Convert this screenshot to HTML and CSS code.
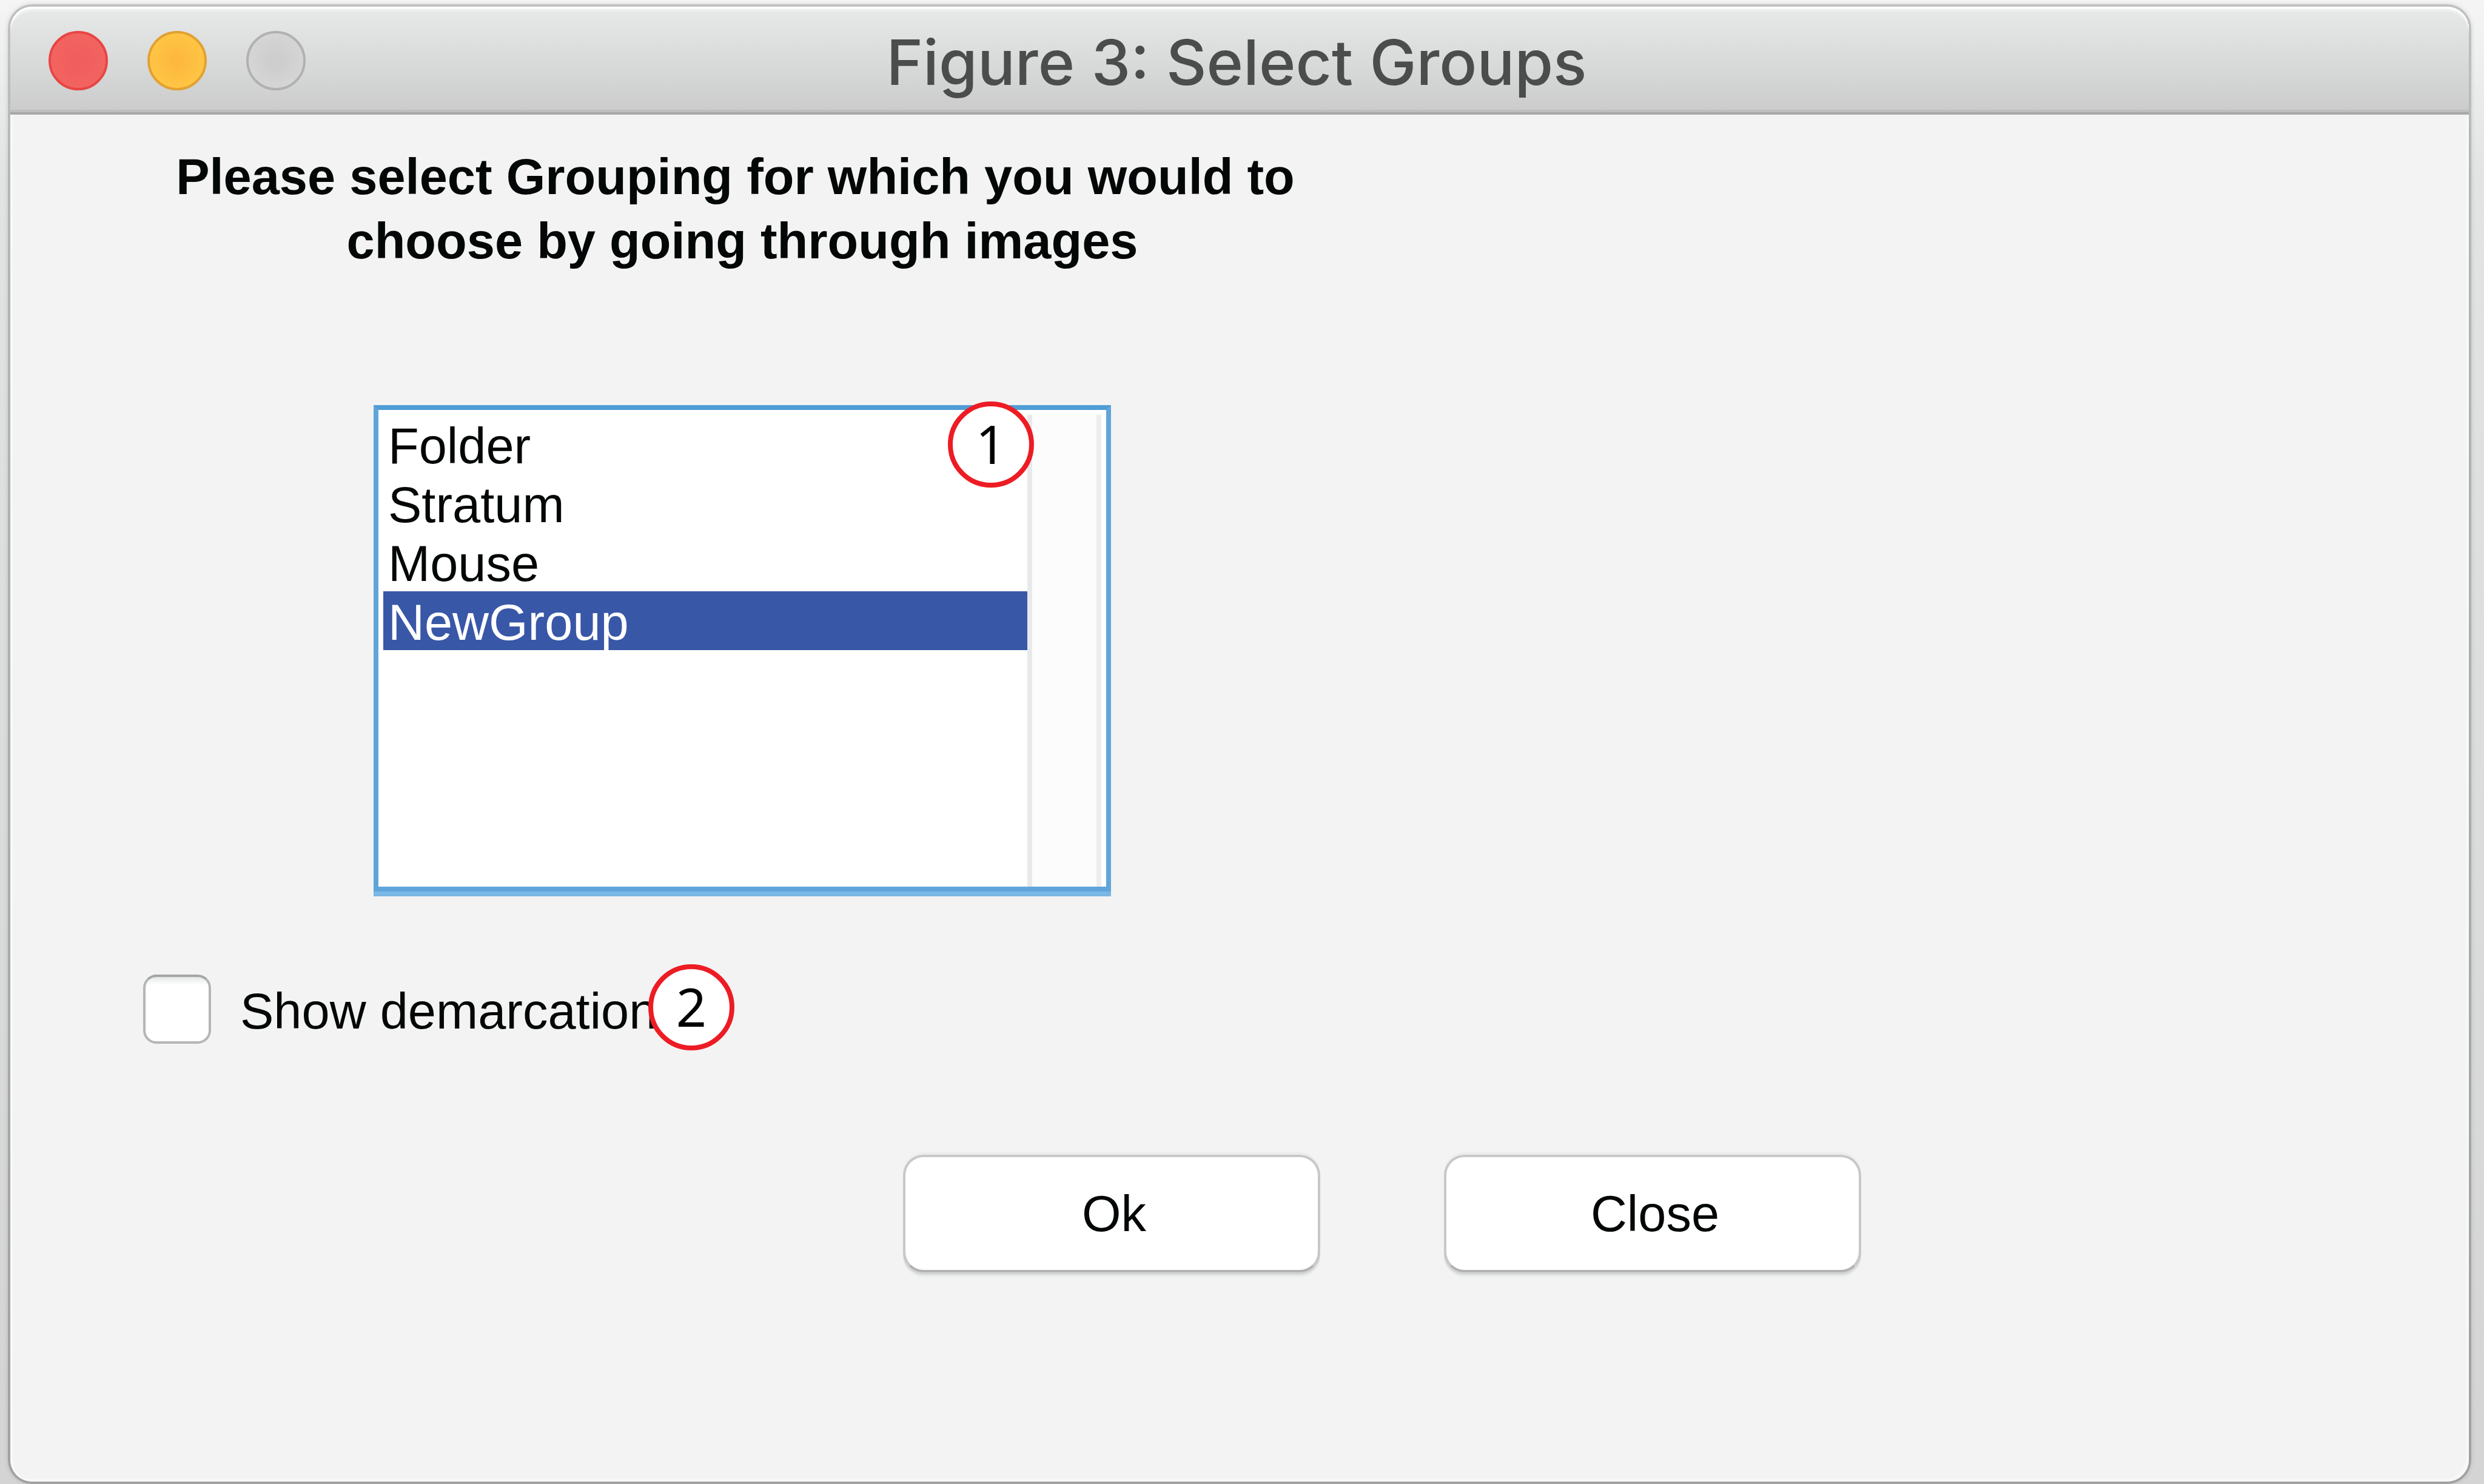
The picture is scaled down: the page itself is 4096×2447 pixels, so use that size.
FILE: index.html
```html
<!DOCTYPE html>
<html lang="en">
<head>
<meta charset="utf-8">
<title>Figure 3: Select Groups</title>
<link rel="stylesheet" href="styles.css">
</head>
<body>
<main class="window">
  <header class="titlebar">
    <div class="lights">
      <button class="light light-close" type="button" aria-label="Close window"></button>
      <button class="light light-minimize" type="button" aria-label="Minimize window"></button>
      <button class="light light-zoom" type="button" aria-label="Zoom window" disabled></button>
    </div>
    <h1 class="title">Figure 3: Select Groups</h1>
  </header>
  <form class="content">
    <div class="grouping">
      <label class="prompt" for="groups">Please select Grouping for which you would to 
choose by going through images</label>
      <div class="listbox">
        <select class="list" id="groups" size="4">
          <option>Folder</option>
          <option>Stratum</option>
          <option>Mouse</option>
          <option selected>NewGroup</option>
        </select>
        <div class="track"></div>
        <span class="badge badge-list">1</span>
      </div>
    </div>
    <div class="check-row">
      <input class="check" type="checkbox" id="demarcation">
      <label class="check-label" for="demarcation">Show demarcation</label>
      <span class="badge badge-check">2</span>
    </div>
    <div class="actions">
      <button class="button" type="button">Ok</button>
      <button class="button" type="button">Close</button>
    </div>
  </form>
</main>
</body>
</html>
```
FILE: styles.css
```css
* {
  box-sizing: border-box;
}

body {
  margin: 0;
  min-height: 100vh;
  padding: 7px 21px 0 13px;
  display: flex;
  background: linear-gradient(#f4f5f4, #e1e4e3 12%, #d4d4d4);
  font-family: "Liberation Sans", Arial, sans-serif;
  font-size: 83px;
  color: #040707;
}

.window {
  flex: 1;
  display: flex;
  flex-direction: column;
  border: 4px solid transparent;
  border-radius: 40px;
  background:
    linear-gradient(#f3f3f3, #f3f3f3) padding-box,
    linear-gradient(#c0c1c0, #b4b6b5 12%, #a0a1a0) border-box;
  box-shadow: 0 0 6px 2px rgba(0, 0, 0, 0.08);
}

.titlebar {
  display: grid;
  grid-template-columns: 1fr auto 1fr;
  align-items: center;
  height: 178px;
  padding: 0 73px 0 63px;
  border-bottom: 4px solid #a7a7a7;
  border-radius: 36px 36px 0 0;
  background: linear-gradient(#e8e9e9, #dfe1e1 30%, #cbcbcb);
  box-shadow: inset 0 4px #fcfdfd, inset 0 8px #edf0ef, inset 0 -4px #bebebe;
}

.lights {
  display: flex;
  gap: 65px;
  padding-top: 4px;
}

.light {
  width: 98px;
  height: 98px;
  padding: 0;
  border: 4px solid;
  border-radius: 50%;
}

.light-close {
  border-color: #e84545;
  background: radial-gradient(#f15e5e 20%, #f26460 70%);
}

.light-minimize {
  border-color: #e2a131;
  background: radial-gradient(#fdb93e 15%, #ffc444 65%);
}

.light-zoom {
  border-color: #b1b1b1;
  background: radial-gradient(#cecece 20%, #d5d5d5 70%);
}

.title {
  margin: 0;
  padding-top: 10px;
  font-family: Inter, "Liberation Sans", sans-serif;
  font-size: 103px;
  font-weight: 500;
  line-height: 128px;
  color: #4b4c4c;
}

.content {
  flex: 1;
  padding: 50px 219px 0;
  border-radius: 0 0 36px 36px;
  box-shadow: inset 4px 0 #f7f9f8, inset -4px -4px #f7f9f8;
}

.grouping {
  display: flex;
  flex-direction: column;
  align-items: center;
  gap: 217px;
  max-width: 1976px;
}

.prompt {
  font-weight: 700;
  line-height: 106px;
  text-align: center;
  white-space: pre;
}

.listbox {
  position: relative;
  display: flex;
  width: 1216px;
  height: 810px;
  padding: 8px 8px 0;
  border: 8px solid #60a5da;
  border-top-color: #4f9cd6;
  border-bottom: 0;
  background: #fff;
}

.listbox::after {
  content: "";
  position: absolute;
  inset: auto -8px 0;
  height: 16px;
  background: linear-gradient(#60a5da 50%, #79b7e5 50%);
}

.list {
  flex: 1;
  appearance: none;
  margin: 0;
  padding: 0;
  border: 0;
  border-radius: 0;
  outline: 0;
  overflow: hidden;
  background: #fff;
  font: inherit;
  color: inherit;
}

.list option {
  height: 97px;
  min-height: 0;
  padding: 4px 8px 0;
  line-height: 91px;
  color: #040707;
}

.list option:checked {
  background: linear-gradient(#3957a7, #3957a7);
  color: #fff;
}

.track {
  width: 122px;
  border-left: 8px solid #e7e9ea;
  border-right: 8px solid #eceeed;
  background: #fcfcfc;
}

.badge {
  position: absolute;
  width: 142px;
  height: 142px;
  border: 8px solid #ed1c24;
  border-radius: 50%;
  background: #fff;
  font-family: "Noto Sans", sans-serif;
  font-size: 88px;
  line-height: 122px;
  text-align: center;
  color: #000;
}

.badge-list {
  top: -14px;
  right: 119px;
}

.check-row {
  position: relative;
  display: flex;
  align-items: center;
  gap: 48px;
  width: 975px;
  margin-top: 129px;
}

.check {
  appearance: none;
  width: 112px;
  height: 114px;
  margin: 0;
  border: 4px solid #b5b5b5;
  border-top-color: #a5a5a5;
  border-radius: 22px;
  background: linear-gradient(#e4e6e6, #f2f4f4 6px, #fff 14px);
}

.check-label {
  padding-top: 8px;
  line-height: 106px;
  white-space: nowrap;
}

.badge-check {
  top: -17px;
  right: 0;
}

.actions {
  display: flex;
  gap: 204px;
  margin-top: 183px;
  padding-left: 1253px;
}

.button {
  width: 688px;
  height: 194px;
  padding: 2px 0 0 8px;
  border: 4px solid #c8c8c8;
  border-bottom-color: #b2b2b2;
  border-radius: 34px;
  background: #fff;
  box-shadow: 0 4px #d4d5d5, 0 8px #e8ebec, 0 -4px #ebeeed;
  font: inherit;
  color: inherit;
}
```
